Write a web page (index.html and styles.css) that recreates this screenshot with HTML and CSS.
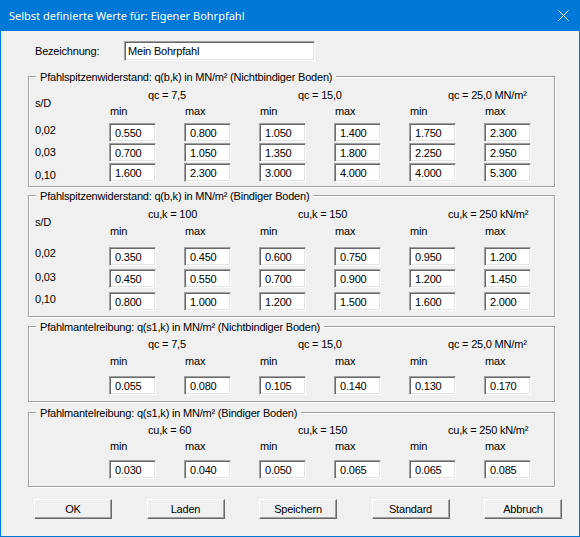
FILE: index.html
```html
<!DOCTYPE html>
<html lang="de">
<head>
<meta charset="utf-8">
<title>Selbst definierte Werte</title>
<link rel="stylesheet" href="styles.css">
</head>
<body>
<div class="window">
  <div class="titlebar">
    <span class="title">Selbst definierte Werte für: Eigener Bohrpfahl</span>
    <svg class="close" width="11" height="11" viewBox="0 0 11 11"><path d="M0.5 0.5 L10.5 10.5 M10.5 0.5 L0.5 10.5" stroke="#fff" stroke-width="1" fill="none"/></svg>
  </div>
  <div class="client">
    <div class="namerow">
      <span class="namelabel">Bezeichnung:</span>
      <div class="field namefield">Mein Bohrpfahl</div>
    </div>

    <div class="group g1">
      <div class="gtitle">Pfahlspitzenwiderstand: q(b,k) in MN/m² (Nichtbindiger Boden)</div>
      <div class="grid">
        <div class="sd">s/D</div>
        <div class="hd c2">qc = 7,5</div>
        <div class="hd c4">qc = 15,0</div>
        <div class="hd c6">qc = 25,0 MN/m²</div>
        <div class="mm f">min</div><div class="mm">max</div><div class="mm">min</div><div class="mm">max</div><div class="mm">min</div><div class="mm">max</div>
        <div class="rowlabels"><span class="rl">0,02</span><span class="rl">0,03</span><span class="rl">0,10</span></div>
        <div class="field f">0.550</div><div class="field">0.800</div><div class="field">1.050</div><div class="field">1.400</div><div class="field">1.750</div><div class="field">2.300</div>
        <div class="field f">0.700</div><div class="field">1.050</div><div class="field">1.350</div><div class="field">1.800</div><div class="field">2.250</div><div class="field">2.950</div>
        <div class="field f">1.600</div><div class="field">2.300</div><div class="field">3.000</div><div class="field">4.000</div><div class="field">4.000</div><div class="field">5.300</div>
      </div>
    </div>

    <div class="group g2">
      <div class="gtitle">Pfahlspitzenwiderstand: q(b,k) in MN/m² (Bindiger Boden)</div>
      <div class="grid">
        <div class="sd">s/D</div>
        <div class="hd c2">cu,k = 100</div>
        <div class="hd c4">cu,k = 150</div>
        <div class="hd c6">cu,k = 250 kN/m²</div>
        <div class="mm f">min</div><div class="mm">max</div><div class="mm">min</div><div class="mm">max</div><div class="mm">min</div><div class="mm">max</div>
        <div class="rowlabels"><span class="rl">0,02</span><span class="rl">0,03</span><span class="rl">0,10</span></div>
        <div class="field f">0.350</div><div class="field">0.450</div><div class="field">0.600</div><div class="field">0.750</div><div class="field">0.950</div><div class="field">1.200</div>
        <div class="field f">0.450</div><div class="field">0.550</div><div class="field">0.700</div><div class="field">0.900</div><div class="field">1.200</div><div class="field">1.450</div>
        <div class="field f">0.800</div><div class="field">1.000</div><div class="field">1.200</div><div class="field">1.500</div><div class="field">1.600</div><div class="field">2.000</div>
      </div>
    </div>

    <div class="group g3">
      <div class="gtitle">Pfahlmantelreibung: q(s1,k) in MN/m² (Nichtbindiger Boden)</div>
      <div class="grid">
        <div class="hd c2">qc = 7,5</div>
        <div class="hd c4">qc = 15,0</div>
        <div class="hd c6">qc = 25,0 MN/m²</div>
        <div class="mm f">min</div><div class="mm">max</div><div class="mm">min</div><div class="mm">max</div><div class="mm">min</div><div class="mm">max</div>
        <div class="field f">0.055</div><div class="field">0.080</div><div class="field">0.105</div><div class="field">0.140</div><div class="field">0.130</div><div class="field">0.170</div>
      </div>
    </div>

    <div class="group g4">
      <div class="gtitle">Pfahlmantelreibung: q(s1,k) in MN/m² (Bindiger Boden)</div>
      <div class="grid">
        <div class="hd c2">cu,k = 60</div>
        <div class="hd c4">cu,k = 150</div>
        <div class="hd c6">cu,k = 250 kN/m²</div>
        <div class="mm f">min</div><div class="mm">max</div><div class="mm">min</div><div class="mm">max</div><div class="mm">min</div><div class="mm">max</div>
        <div class="field f">0.030</div><div class="field">0.040</div><div class="field">0.050</div><div class="field">0.065</div><div class="field">0.065</div><div class="field">0.085</div>
      </div>
    </div>

    <div class="buttons">
      <div class="btn">OK</div>
      <div class="btn">Laden</div>
      <div class="btn">Speichern</div>
      <div class="btn">Standard</div>
      <div class="btn">Abbruch</div>
    </div>
  </div>
</div>
</body>
</html>
```

FILE: styles.css
```css
html, body {
  margin: 0;
  padding: 0;
  background: #f0f0f0;
}

body {
  font-family: "Liberation Sans", Arial, sans-serif;
  font-size: 11px;
  line-height: 13px;
  letter-spacing: -0.2px;
  color: #000;
}

.window {
  width: 580px;
  height: 537px;
  box-sizing: border-box;
  border: 1px solid #0078d7;
  border-top: 0;
  background: #f0f0f0;
}

.titlebar {
  height: 31px;
  background: #0078d7;
  display: flex;
  align-items: center;
  justify-content: space-between;
  padding: 0 10px 0 8px;
  color: #fff;
}

.title {
  font-family: "Noto Sans", "Open Sans", sans-serif;
  font-size: 11px;
  letter-spacing: 0;
  line-height: 16px;
  padding-top: 1px;
}

.close {
  display: block;
  margin-top: -1px;
}

.client {
  padding: 10px 24px 0 27px;
}

.namerow {
  display: flex;
  align-items: center;
  padding-left: 7px;
}

.namelabel {
  width: 89px;
}

.field {
  box-sizing: border-box;
  height: 19px;
  background: #fff;
  border: 1px solid;
  border-color: #a0a0a0 #fff #fff #a0a0a0;
  box-shadow: inset 1px 1px 0 #696969, inset -1px -1px 0 #e3e3e3;
  padding: 3px 0 0 5px;
  line-height: 13px;
  white-space: nowrap;
}

.namefield {
  width: 191px;
  height: 20px;
  padding-left: 3px;
  padding-top: 3px;
}

.group {
  border: 1px solid #a0a0a0;
  box-shadow: inset 1px 1px 0 #fff, 1px 1px 0 #fff;
  padding: 0 6px;
}

.g1 { margin-top: 15px; padding-bottom: 4px; }
.g2 { margin-top: 8px; padding-bottom: 5px; }
.g3 { margin-top: 9px; padding-bottom: 6px; }
.g4 { margin-top: 10px; padding-bottom: 7px; }

.gtitle {
  width: fit-content;
  margin: -6px 0 0 1px;
  padding: 0 4px;
  background: #f0f0f0;
  line-height: 13px;
  white-space: nowrap;
}

.grid {
  display: grid;
  grid-template-columns: 46px repeat(6, 47px);
  column-gap: 28px;
}

.g1 .grid { margin-top: 5px; grid-template-rows: 16px 18px 20px 20px 19px; }
.g2 .grid { margin-top: 5px; grid-template-rows: 17px 22px 22px 23px 19px; }
.g3 .grid { margin-top: 4px; grid-template-rows: 17px 21px 19px; }
.g4 .grid { margin-top: 4px; grid-template-rows: 16px 20px 19px; }

.sd {
  grid-column: 1;
  grid-row: 1 / span 2;
  padding-top: 8px;
}

.hd {
  grid-row: 1;
  grid-column-end: span 2;
  padding-left: 39px;
  white-space: nowrap;
}

.c2 { grid-column-start: 2; }
.c4 { grid-column-start: 4; }
.c6 { grid-column-start: 6; }

.mm {
  padding-left: 1px;
}

.f {
  grid-column-start: 2;
}

.rowlabels {
  grid-column: 1;
  grid-row: 3 / span 3;
  display: flex;
  flex-direction: column;
}

.g1 .rowlabels { padding-top: 1px; }
.g1 .rl:nth-child(1) { height: 22px; }
.g1 .rl:nth-child(2) { height: 23px; }
.g2 .rl:nth-child(1) { height: 24px; }
.g2 .rl:nth-child(2) { height: 22px; }

.buttons {
  display: flex;
  gap: 34.5px;
  padding-left: 6px;
  margin-top: 12px;
  margin-right: -24px;
}

.btn {
  flex: none;
  box-sizing: border-box;
  width: 78px;
  height: 20px;
  background: #f0f0f0;
  border: 1px solid;
  border-color: #fff #696969 #696969 #fff;
  box-shadow: inset -1px -1px 0 #a0a0a0;
  text-align: center;
  line-height: 18px;
}
```
